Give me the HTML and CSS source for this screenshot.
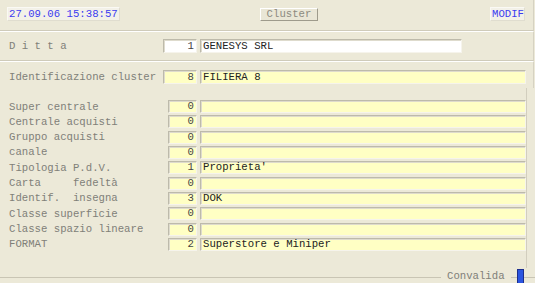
FILE: index.html
```html
<!DOCTYPE html>
<html lang="it">
    <head>
        <meta charset="UTF-8">
        <title>Cluster</title>
        <link rel="stylesheet" href="styles.css">
    </head>
    <body>

        <div class="frm">

            <div class="frm_head">
                <div class="stamp">27.09.06 15:38:57</div>
                <div class="btn_cluster">Cluster</div>
                <div class="mode">MODIF</div>
            </div>

            <div class="frm_sect sect_ditta">
                <span class="lbl">D i t t a</span>
                <span class="box num white">1</span>
                <span class="box txt white short">GENESYS SRL</span>
            </div>

            <div class="frm_sect sect_ident">
                <span class="lbl">Identificazione cluster</span>
                <span class="box num">8</span>
                <span class="box txt">FILIERA 8</span>
            </div>

            <div class="frm_panel">
                <div class="rows">
                    <span class="lbl">Super centrale</span><span class="box num">0</span><span class="box txt"></span>
                    <span class="lbl">Centrale acquisti</span><span class="box num">0</span><span class="box txt"></span>
                    <span class="lbl">Gruppo acquisti</span><span class="box num">0</span><span class="box txt"></span>
                    <span class="lbl">canale</span><span class="box num">0</span><span class="box txt"></span>
                    <span class="lbl">Tipologia P.d.V.</span><span class="box num">1</span><span class="box txt">Proprieta'</span>
                    <span class="lbl">Carta     fedeltà</span><span class="box num">0</span><span class="box txt"></span>
                    <span class="lbl">Identif.  insegna</span><span class="box num">3</span><span class="box txt">DOK</span>
                    <span class="lbl">Classe superficie</span><span class="box num">0</span><span class="box txt"></span>
                    <span class="lbl">Classe spazio lineare</span><span class="box num">0</span><span class="box txt"></span>
                    <span class="lbl">FORMAT</span><span class="box num">2</span><span class="box txt">Superstore e Miniper</span>
                </div>
            </div>

            <div class="frm_foot">
                <span class="line wide"></span>
                <span class="legend">Convalida</span>
                <span class="line tiny"></span>
                <span class="flag"></span>
                <span class="line rest"></span>
            </div>

        </div>

    </body>
</html>
```

FILE: styles.css
```css
* {
    margin: 0px;
    padding: 0px;
    box-sizing: border-box;
}

body {
    background-color: #ECE9D8;
    font-family: "Liberation Mono", "Courier New", monospace;
    font-size: 8pt;
    color: #333333;
    width: 535px;
    height: 283px;
    overflow: hidden;
}

.frm {
    width: 535px;
}

/* intestazione */
.frm_head {
    display: flex;
    align-items: flex-start;
    height: 32px;
    padding-top: 7px;
    border-top: 1px solid #F7F5EE;
    border-right: 1px solid #D6D2C2;
    border-bottom: 1px solid #CFCBBA;
    margin-right: 1px;
    margin-top: -1px;
}

.stamp {
    margin-left: 7px;
    width: 113px;
    height: 14px;
    line-height: 13px;
    padding-left: 1px;
    white-space: nowrap;
    color: #3C3CF0;
    background-color: #F3F1E8;
    border: 1px solid #FAF9F4;
    border-right-color: #E0DDCF;
    border-bottom-color: #E0DDCF;
}

.btn_cluster {
    margin-left: 140px;
    margin-top: 1px;
    width: 58px;
    height: 13px;
    line-height: 11px;
    text-align: center;
    color: #8C8A80;
    background-color: #E9E6D6;
    border: 1px solid #FFFFFF;
    border-right-color: #9E9B8C;
    border-bottom-color: #9E9B8C;
}

.mode {
    margin-left: auto;
    margin-right: 8px;
    width: 35px;
    height: 14px;
    line-height: 13px;
    padding-left: 1px;
    white-space: nowrap;
    color: #3C3CF0;
    background-color: #F3F1E8;
    border: 1px solid #FAF9F4;
    border-right-color: #E0DDCF;
    border-bottom-color: #E0DDCF;
}

/* sezioni */
.frm_sect {
    display: flex;
    align-items: center;
    padding-left: 9px;
    border-top: 1px solid #FFFFFF;
    border-right: 1px solid #D6D2C2;
    margin-right: 1px;
}

.sect_ditta {
    height: 30px;
    padding-bottom: 1px;
    border-bottom: 1px solid #CFCBBA;
}

.sect_ident {
    height: 27px;
    padding-top: 3px;
}

.frm_sect .lbl {
    width: 154px;
}

.lbl {
    color: #808078;
    white-space: pre;
}

.box {
    height: 14px;
    line-height: 12px;
    white-space: pre;
    background-color: #FFFFC4;
    border-top: 1px solid #BDBAAB;
    border-left: 1px solid #BDBAAB;
    border-right: 1px solid #F6F4EC;
    border-bottom: 1px solid #F6F4EC;
    box-shadow: inset 1px 1px 0 #DEDBCD;
}

.box.white {
    background-color: #FFFFFF;
}

.num {
    width: 34px;
    text-align: right;
    padding-right: 2px;
    color: #444444;
}

.txt {
    width: 326px;
    margin-left: 3px;
    padding-left: 2px;
    color: #222222;
}

.txt.short {
    width: 262px;
}

/* pannello campi */
.frm_panel {
    height: 180px;
    margin-right: 8px;
    padding-top: 12px;
    padding-left: 9px;
    border-right: 1px solid #D2CEBE;
}

.rows {
    display: grid;
    grid-template-columns: 159px 29px 329px;
    grid-auto-rows: 13px;
    row-gap: 2.33px;
    align-items: center;
}

.rows .box {
    height: 13px;
    line-height: 11px;
}

.rows .num {
    width: 29px;
}

.rows .txt {
    width: 326px;
}

/* piede */
.frm_foot {
    display: flex;
    align-items: center;
    height: 14px;
    margin-top: 1px;
}

.line {
    border-top: 1px solid #C9C5B4;
    height: 0px;
    margin-top: 2px;
}

.line.wide {
    width: 441px;
}

.line.tiny {
    width: 6px;
}

.line.rest {
    flex: 1;
}

.legend {
    width: 70px;
    padding-left: 6px;
    color: #808078;
}

.flag {
    width: 7px;
    height: 14px;
    align-self: flex-end;
    background-color: #2B55E0;
    border: 1px solid #1C2E8C;
    border-bottom: none;
}
```
